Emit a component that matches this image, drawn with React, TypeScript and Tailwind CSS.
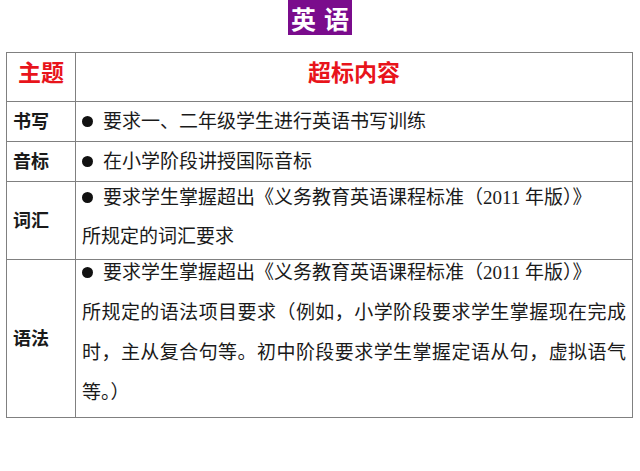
const FONT = "font-['Liberation_Serif','Noto_Sans_CJK_SC',sans-serif]"

function Bullet() {
  return <span className="inline-block w-[11px] h-[11px] rounded-full bg-[#111] mr-[10px] align-[1px]" />
}

export default function App() {
  return (
    <div className={`w-[640px] h-[471px] bg-white ${FONT} text-[#1a1a1a]`}>
      {/* Title */}
      <div className="flex justify-center">
        <div className="w-[64px] h-[35px] bg-[#7a0c8c] flex items-center justify-center gap-[8px] text-white text-[25px] font-bold leading-[30px] font-['Noto_Sans_CJK_SC',sans-serif]">
          <span>英</span>
          <span>语</span>
        </div>
      </div>

      {/* Table */}
      <table className="mt-[17px] ml-[6px] w-[627px] border-collapse table-fixed text-[19px]">
        <colgroup>
          <col className="w-[69px]" />
          <col />
        </colgroup>
        <tbody>
          <tr className="h-[49px]">
            <td className="border border-[#808080] align-top text-center pt-[2px] leading-[32px] text-[23px] font-bold text-[#e8141b] font-['Noto_Sans_CJK_SC',sans-serif]">
              主题
            </td>
            <td className="border border-[#808080] align-top text-center pt-[2px] leading-[32px] text-[23px] font-bold text-[#e8141b] font-['Noto_Sans_CJK_SC',sans-serif]">
              超标内容
            </td>
          </tr>
          <tr className="h-[40px]">
            <td className="border border-[#808080] pl-[6px] font-bold text-[18px] leading-none">书写</td>
            <td className="border border-[#808080] pl-[6px] leading-none">
              <Bullet />要求一、二年级学生进行英语书写训练
            </td>
          </tr>
          <tr className="h-[40px]">
            <td className="border border-[#808080] pl-[6px] font-bold text-[18px] leading-none">音标</td>
            <td className="border border-[#808080] pl-[6px] leading-none">
              <Bullet />在小学阶段讲授国际音标
            </td>
          </tr>
          <tr className="h-[78px]">
            <td className="border border-[#808080] pl-[6px] font-bold text-[18px] leading-none">词汇</td>
            <td className="border border-[#808080] pl-[6px] align-top leading-[39px]">
              <div className="-mt-[4px] -mb-[4px]">
                <div><Bullet />要求学生掌握超出《义务教育英语课程标准（2011 年版）》</div>
                <div>所规定的词汇要求</div>
              </div>
            </td>
          </tr>
          <tr className="h-[158px]">
            <td className="border border-[#808080] pl-[6px] font-bold text-[18px] leading-none">语法</td>
            <td className="border border-[#808080] pl-[6px] pr-[6px] align-top leading-[40px]">
              <div className="-mt-[7px] -mb-[7px]">
                <div><Bullet />要求学生掌握超出《义务教育英语课程标准（2011 年版）》</div>
                <div className="[text-align-last:justify]">所规定的语法项目要求（例如，小学阶段要求学生掌握现在完成</div>
                <div className="[text-align-last:justify]">时，主从复合句等。初中阶段要求学生掌握定语从句，虚拟语气</div>
                <div>等。）</div>
              </div>
            </td>
          </tr>
        </tbody>
      </table>
    </div>
  )
}
